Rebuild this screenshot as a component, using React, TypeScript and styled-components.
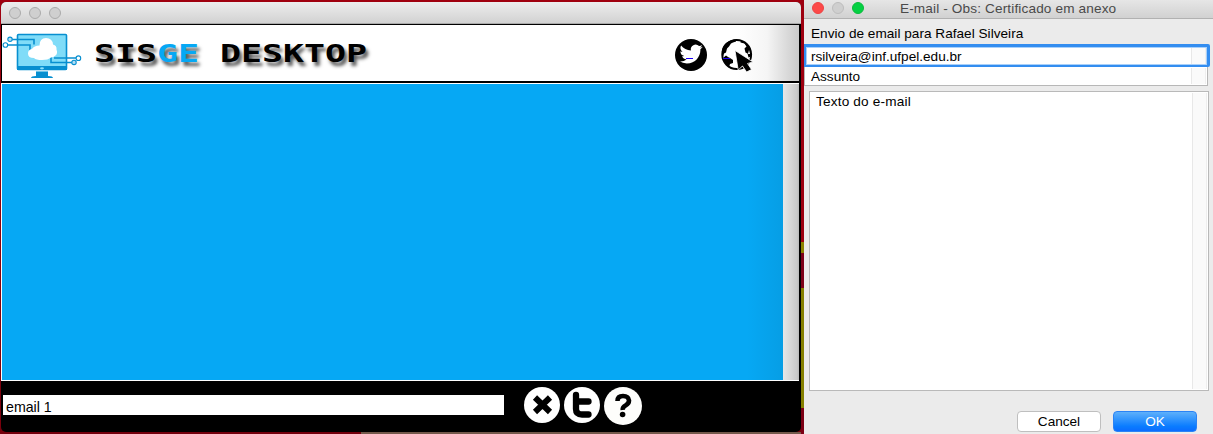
import React from "react";
import styled, { createGlobalStyle } from "styled-components";

const Global = createGlobalStyle`
  * { box-sizing: border-box; }
  body { margin: 0; font-family: "Liberation Sans", Arial, sans-serif; font-size: 14px; color: #000; overflow: hidden; }
`;
const Desktop = styled.div`
  width: 1213px; height: 434px; display: flex; background: #a0000f; overflow: hidden;
`;
const LeftArea = styled.div`
  width: 801px; height: 434px; padding: 2px 0 0 1px; flex: none;
  background: linear-gradient(90deg, #74000d 0 361px, #74594b 361px) 0 432px / 100% 2px no-repeat, linear-gradient(#a0000f, #78000c);
`;
const Wallpaper = styled.div`
  width: 3px; flex: none;
  background: linear-gradient(#9d0010 0 242px, #8c8200 242px 253px, #7c0018 253px 288px, #858000 288px 408px, #7c0014 408px);
`;
const Window = styled.div`
  width: 800px; height: 430px; display: flex; flex-direction: column; background: #000;
  border-radius: 5px; overflow: hidden;
`;
const TitleBar = styled.div`
  height: 22px; flex: none; display: flex; align-items: center; gap: 8px; padding-left: 8px;
  background: linear-gradient(#ededed, #d2d2d2); border-bottom: 1px solid #aaa;
`;
const Light = styled.span<{ $fill: string; $edge: string }>`
  width: 12px; height: 12px; flex: none; border-radius: 50%;
  background: ${p => p.$fill}; border: 1px solid ${p => p.$edge};
`;
const Header = styled.div`
  height: 59px; flex: none; display: flex; margin-right: 1px;
  border: solid #000; border-width: 1px 1px 2px;
  background: linear-gradient(90deg, #fff 735px, #f5f5f5 765px, #c8c8c8 798px);
`;
const Logo = styled.svg`flex: none; margin-top: 8px;`;
const Wordmark = styled.div`
  width: 581px; margin-left: 12px; margin-top: 14px; height: 29px; line-height: 29px; white-space: pre;
  font-family: "DejaVu Sans Mono", monospace; font-weight: bold; font-size: 24.7px;
  transform: scaleX(1.413); transform-origin: 0 0; text-shadow: 2px 4px 3px rgba(0,0,0,.65);
`;
const Blue = styled.span`color: #06a8f4;`;
const HeaderIcons = styled.div`
  display: flex; gap: 14px; margin-top: 13px; height: 34px;
`;
const Content = styled.div`
  height: 298px; flex: none; display: flex; margin-right: 2px;
  border: solid #fff; border-width: 1px 0 1px 1px;
`;
const Canvas = styled.div`
  width: 781px; background: linear-gradient(90deg, #06a8f4 745px, #069ee5 781px);
`;
const Gutter = styled.div`
  flex: 1; background: linear-gradient(90deg, #e7e7e7, #c9c9c9 14px, #b8b8b8);
`;
const Footer = styled.div`
  flex: 1; display: flex; padding-left: 2px;
`;
const StatusField = styled.div`
  width: 501px; height: 20px; margin: 14px 20px 0 0; padding-left: 3px;
  background: #fff; line-height: 25px; font-size: 14.2px;
`;
const FooterIcons = styled.svg`margin-top: 5px;`;
const Dialog = styled.div`
  width: 409px; height: 434px; flex: none; background: #ebebeb; display: flex; flex-direction: column;
`;
const DialogBar = styled.div`
  height: 19px; flex: none; display: flex; gap: 8px; padding: 2px 0 0 8px;
  background: linear-gradient(#e6e6e6, #d1d1d1); border-bottom: 1px solid #b1b1b1;
`;
const DialogTitle = styled.span`
  margin-left: 28px; color: #4a4a4a; line-height: 14px; font-size: 13.6px; letter-spacing: .14px; white-space: nowrap;
`;
const Label = styled.div`
  height: 25px; flex: none; padding-left: 7px; line-height: 29px; font-size: 13.6px; letter-spacing: .02px;
`;
const Field = styled.div<{ $focus?: boolean }>`
  width: ${p => (p.$focus ? 406 : 404)}px; height: ${p => (p.$focus ? 23 : 19)}px; flex: none; display: flex;
  justify-content: space-between; background: #fff; font-size: 13.6px;
  line-height: ${p => (p.$focus ? 19 : 20)}px;
  padding: ${p => (p.$focus ? "0 1px 0 5px" : "0 1px 0 6px")};
  border: solid ${p => (p.$focus ? "#338df0" : "#b7b7b7")};
  border-width: ${p => (p.$focus ? "3px 3px 2px 2px" : "0 1px 1px 1px")};
  ${p => p.$focus && "box-shadow: inset 0 0 0 1px #a8d0fa; border-radius: 0 2px 2px 0;"}
`;
const ScrollTrack = styled.span<{ $w: number }>`
  width: ${p => p.$w}px; background: #fafafa; border-left: 1px solid #e8e8e8; border-right: 1px solid #eee;
  margin: 1px 0;
`;
const TextArea = styled.div`
  width: 400px; height: 300px; flex: none; margin: 5px 0 0 5px; border: 1px solid #b9b9b9; background: #fff;
  display: flex; justify-content: space-between; padding: 0 1px 0 6px; line-height: 20px; font-size: 13.6px;
  letter-spacing: .18px;
`;
const Actions = styled.div`
  display: flex; justify-content: flex-end; gap: 12px; padding: 20px 16px 0 0;
`;
const Button = styled.button<{ $primary?: boolean }>`
  width: 84px; height: 21px; padding: 0; border-radius: 4px; font: 13.6px/19px "Liberation Sans", Arial, sans-serif;
  color: ${p => (p.$primary ? "#fff" : "#000")};
  background: ${p => (p.$primary ? "linear-gradient(#5eb0fb, #0a7cff 75%, #0a6cff)" : "#fff")};
  border: 1px solid ${p => (p.$primary ? "#2b83f5" : "#bfbfbf")};
`;

const Monitor = () => (
  <Logo width="80" height="47" viewBox="2 33 80 47">
    <rect x="17.5" y="34.5" width="49" height="35" rx="1" fill="#80dcf8" stroke="#078fd0" strokeWidth="1.6" />
    <path d="M17 66h50v4H17z" fill="#078fd0" />
    <path d="M36 71h12v5H36z" fill="#078fd0" /><path d="M36 71h12v1H36z" fill="#6dc5ea" />
    <path d="M31 78q0-2 5-2h12q5 0 5 2z" fill="#078fd0" />
    <ellipse cx="42" cy="68.3" rx="2" ry="1.1" fill="#8de0fa" />
    <g fill="none" stroke="#078fd0" strokeWidth="1.6">
      <path d="M12 39.500h22v5M8 45h22v6M54 58h22M51 57v5.500h21" />
      <circle cx="10" cy="39.300" r="2.200" fill="#b3def4" strokeWidth="1.100" />
      <circle cx="5.400" cy="45" r="2.300" fill="#fff" strokeWidth="1.100" />
      <circle cx="78.400" cy="58.200" r="2.300" fill="#fff" strokeWidth="1.100" />
      <circle cx="74" cy="62.400" r="2.200" fill="#b3def4" strokeWidth="1.100" />
    </g>
    <path d="M28 53.500q0-4 4-4.500 2-3.500 7.500-3.500 0-7.500 6.500-7.500 6.500 0 7 6.500 4 1 3.500 5 1.500 4-1 6-2 2-4.500 2-3 2.500-9 2.500-6 0-8-2-6 0-6-4.500z" fill="#fff" />
  </Logo>
);

const Bird = () => (
  <svg width="32" height="34" viewBox="0 0 32 34">
    <circle cx="16" cy="17" r="16" fill="#000" />
    <path transform="translate(4.500 4.400) scale(.97 .97)" d="M23.950 4.570a10 10 0 0 1-2.820.770 4.960 4.960 0 0 0 2.160-2.720c-.950.550-2 .960-3.130 1.180a4.920 4.920 0 0 0-8.380 4.480C7.690 8.100 4.070 6.130 1.640 3.160a4.820 4.820 0 0 0-.670 2.480c0 1.710.870 3.210 2.190 4.100a4.900 4.900 0 0 1-2.230-.620v.060a4.920 4.920 0 0 0 3.950 4.830 5 5 0 0 1-2.210.080 4.940 4.940 0 0 0 4.600 3.420A9.870 9.870 0 0 1 0 19.540a14 14 0 0 0 7.550 2.210c9.050 0 14-7.500 14-13.980 0-.210 0-.420-.020-.630a9.940 9.940 0 0 0 2.460-2.550z" fill="#fff" />
    <path d="M11 20.500h7" stroke="#1b00f5" />
  </svg>
);

const GlobeCursor = () => (
  <svg width="32" height="34" viewBox="0 0 32 34">
    <circle cx="15.700" cy="16.500" r="14.500" fill="#fff" stroke="#000" strokeWidth="1.800" />
    <path d="M1 17Q0 9 5 5 10 1 15 1.500l0 2-3 1-2 1-2 3-2 2-1 4-2 1-1 4zM2 20l3-2.500 2 1.500 2 1 3 2 0 3-3 1-1 3.500Q4 27 2 20zM20 2.500q7 2 9.500 9l1 7-3 1-1-4-2-1-1-4 2-2-2-3-4-1z" fill="#000" />
    <path d="M28 12l1 4-2 0z" fill="#fff" />
    <path d="M14 12.500L17.200 32 21.500 28 25.600 34 30.500 31.500 26.500 25.500 32 24z" fill="#000" stroke="#fff" strokeWidth=".8" />
    <path d="M2 20.500h7" stroke="#1b00f5" />
  </svg>
);

export default function App() {
  return (
    <Desktop>
      <Global />
      <LeftArea>
        <Window>
          <TitleBar>
            {[0, 1, 2].map(i => <Light key={i} $fill="#cfcfcf" $edge="#aaa" />)}
          </TitleBar>
          <Header>
            <Monitor />
            <Wordmark>SIS<Blue>GE</Blue> DESKTOP</Wordmark>
            <HeaderIcons><Bird /><GlobeCursor /></HeaderIcons>
          </Header>
          <Content><Canvas /><Gutter /></Content>
          <Footer>
            <StatusField>email 1</StatusField>
            <FooterIcons width="120" height="40" viewBox="0 0 120 40">
              <circle cx="18" cy="19" r="18" fill="#fff" />
              <path d="M11 11.500l15 14.500m0-14.500l-15 14.500" stroke="#000" strokeWidth="6" />
              <circle cx="58" cy="19" r="18" fill="#fff" />
              <path d="M52 9v14q0 5.500 6 5.500h6.500M52 15.500h12.500" fill="none" stroke="#000" strokeWidth="6.300" strokeLinecap="round" />
              <circle cx="99" cy="20" r="19" fill="#fdfdfb" />
              <path d="M93.500 15q0-5 5.500-5t6 4.500q0 3-3.500 5-3 1.500-2.800 4.500" fill="none" stroke="#000" strokeWidth="4.600" />
              <circle cx="98.600" cy="28.500" r="2.800" />
            </FooterIcons>
          </Footer>
        </Window>
      </LeftArea>
      <Wallpaper />
      <Dialog>
        <DialogBar>
          <Light $fill="#fc4948" $edge="#ed4345" />
          <Light $fill="#cfcfcf" $edge="#bdbdbd" />
          <Light $fill="#05d043" $edge="#0abb3c" />
          <DialogTitle>E-mail - Obs: Certificado em anexo</DialogTitle>
        </DialogBar>
        <Label>Envio de email para Rafael Silveira</Label>
        <Field $focus>rsilveira@inf.ufpel.edu.br<ScrollTrack $w={15} /></Field>
        <Field>Assunto<ScrollTrack $w={15} /></Field>
        <TextArea>Texto do e-mail<ScrollTrack $w={15} /></TextArea>
        <Actions><Button>Cancel</Button><Button $primary>OK</Button></Actions>
      </Dialog>
    </Desktop>
  );
}
